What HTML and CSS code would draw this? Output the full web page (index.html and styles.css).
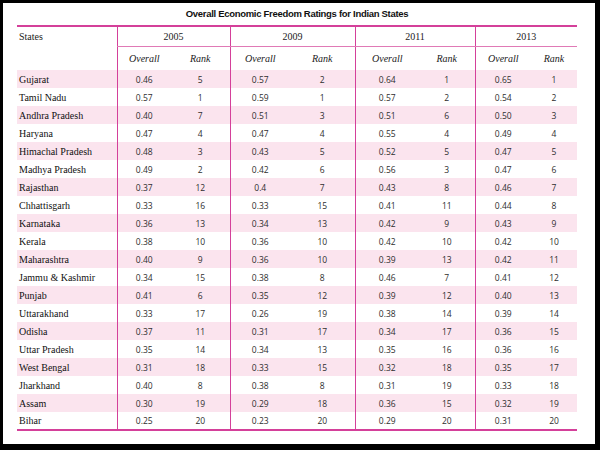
FILE: index.html
```html
<!DOCTYPE html>
<html>
<head>
<meta charset="utf-8">
<link rel="stylesheet" href="styles.css">
</head>
<body>
<div class="frame">
  <h1 class="title">Overall Economic Freedom Ratings for Indian States</h1>
  <table class="ratings">
    <colgroup>
      <col class="c-state">
      <col class="c-a1"><col class="c-a2">
      <col class="c-b1"><col class="c-b2">
      <col class="c-c1"><col class="c-c2">
      <col class="c-d1"><col class="c-d2">
    </colgroup>
    <thead>
      <tr class="yr">
        <th class="state-h" rowspan="2">States</th>
        <th class="grp" colspan="2">2005</th>
        <th class="grp" colspan="2">2009</th>
        <th class="grp" colspan="2">2011</th>
        <th class="grp" colspan="2">2013</th>
      </tr>
      <tr class="sub">
        <th class="grp">Overall</th><th>Rank</th>
        <th class="grp">Overall</th><th>Rank</th>
        <th class="grp">Overall</th><th>Rank</th>
        <th class="grp">Overall</th><th>Rank</th>
      </tr>
    </thead>
    <tbody>
      <tr><td class="st">Gujarat</td><td class="grp">0.46</td><td>5</td><td class="grp">0.57</td><td>2</td><td class="grp">0.64</td><td>1</td><td class="grp">0.65</td><td>1</td></tr>
      <tr><td class="st">Tamil Nadu</td><td class="grp">0.57</td><td>1</td><td class="grp">0.59</td><td>1</td><td class="grp">0.57</td><td>2</td><td class="grp">0.54</td><td>2</td></tr>
      <tr><td class="st">Andhra Pradesh</td><td class="grp">0.40</td><td>7</td><td class="grp">0.51</td><td>3</td><td class="grp">0.51</td><td>6</td><td class="grp">0.50</td><td>3</td></tr>
      <tr><td class="st">Haryana</td><td class="grp">0.47</td><td>4</td><td class="grp">0.47</td><td>4</td><td class="grp">0.55</td><td>4</td><td class="grp">0.49</td><td>4</td></tr>
      <tr><td class="st">Himachal Pradesh</td><td class="grp">0.48</td><td>3</td><td class="grp">0.43</td><td>5</td><td class="grp">0.52</td><td>5</td><td class="grp">0.47</td><td>5</td></tr>
      <tr><td class="st">Madhya Pradesh</td><td class="grp">0.49</td><td>2</td><td class="grp">0.42</td><td>6</td><td class="grp">0.56</td><td>3</td><td class="grp">0.47</td><td>6</td></tr>
      <tr><td class="st">Rajasthan</td><td class="grp">0.37</td><td>12</td><td class="grp">0.4</td><td>7</td><td class="grp">0.43</td><td>8</td><td class="grp">0.46</td><td>7</td></tr>
      <tr><td class="st">Chhattisgarh</td><td class="grp">0.33</td><td>16</td><td class="grp">0.33</td><td>15</td><td class="grp">0.41</td><td>11</td><td class="grp">0.44</td><td>8</td></tr>
      <tr><td class="st">Karnataka</td><td class="grp">0.36</td><td>13</td><td class="grp">0.34</td><td>13</td><td class="grp">0.42</td><td>9</td><td class="grp">0.43</td><td>9</td></tr>
      <tr><td class="st">Kerala</td><td class="grp">0.38</td><td>10</td><td class="grp">0.36</td><td>10</td><td class="grp">0.42</td><td>10</td><td class="grp">0.42</td><td>10</td></tr>
      <tr><td class="st">Maharashtra</td><td class="grp">0.40</td><td>9</td><td class="grp">0.36</td><td>10</td><td class="grp">0.39</td><td>13</td><td class="grp">0.42</td><td>11</td></tr>
      <tr><td class="st">Jammu &amp; Kashmir</td><td class="grp">0.34</td><td>15</td><td class="grp">0.38</td><td>8</td><td class="grp">0.46</td><td>7</td><td class="grp">0.41</td><td>12</td></tr>
      <tr><td class="st">Punjab</td><td class="grp">0.41</td><td>6</td><td class="grp">0.35</td><td>12</td><td class="grp">0.39</td><td>12</td><td class="grp">0.40</td><td>13</td></tr>
      <tr><td class="st">Uttarakhand</td><td class="grp">0.33</td><td>17</td><td class="grp">0.26</td><td>19</td><td class="grp">0.38</td><td>14</td><td class="grp">0.39</td><td>14</td></tr>
      <tr><td class="st">Odisha</td><td class="grp">0.37</td><td>11</td><td class="grp">0.31</td><td>17</td><td class="grp">0.34</td><td>17</td><td class="grp">0.36</td><td>15</td></tr>
      <tr><td class="st">Uttar Pradesh</td><td class="grp">0.35</td><td>14</td><td class="grp">0.34</td><td>13</td><td class="grp">0.35</td><td>16</td><td class="grp">0.36</td><td>16</td></tr>
      <tr><td class="st">West Bengal</td><td class="grp">0.31</td><td>18</td><td class="grp">0.33</td><td>15</td><td class="grp">0.32</td><td>18</td><td class="grp">0.35</td><td>17</td></tr>
      <tr><td class="st">Jharkhand</td><td class="grp">0.40</td><td>8</td><td class="grp">0.38</td><td>8</td><td class="grp">0.31</td><td>19</td><td class="grp">0.33</td><td>18</td></tr>
      <tr><td class="st">Assam</td><td class="grp">0.30</td><td>19</td><td class="grp">0.29</td><td>18</td><td class="grp">0.36</td><td>15</td><td class="grp">0.32</td><td>19</td></tr>
      <tr><td class="st">Bihar</td><td class="grp">0.25</td><td>20</td><td class="grp">0.23</td><td>20</td><td class="grp">0.29</td><td>20</td><td class="grp">0.31</td><td>20</td></tr>
    </tbody>
  </table>
</div>
</body>
</html>
```
FILE: styles.css
```css
html, body {
  margin: 0;
  padding: 0;
  background: #000;
}
body {
  width: 600px;
  height: 450px;
  overflow: hidden;
}
.frame {
  margin: 3px 5px 6px 3px;
  width: 592px;
  height: 441px;
  background: #fff;
  box-sizing: border-box;
  padding-left: 14px;
}
.title {
  margin: 0;
  width: 560px;
  height: 22px;
  line-height: 22px;
  text-align: center;
  font-family: "Liberation Sans", Arial, sans-serif;
  font-weight: bold;
  font-size: 9.5px;
  letter-spacing: -0.3px;
  color: #111;
}
.ratings {
  width: 560px;
  table-layout: fixed;
  border-collapse: collapse;
  border-top: 2px solid #d4409a;
  border-bottom: 2px solid #d4409a;
  font-family: "Liberation Serif", serif;
  font-size: 10px;
  color: #222;
}
.c-state { width: 100px; }
.c-a1 { width: 54px; }
.c-a2 { width: 59px; }
.c-b1 { width: 60px; }
.c-b2 { width: 65px; }
.c-c1 { width: 64px; }
.c-c2 { width: 56px; }
.c-d1 { width: 56px; }
.c-d2 { width: 46px; }
.ratings th, .ratings td {
  padding: 0;
  text-align: center;
  font-weight: normal;
}
.ratings .grp {
  border-left: 1px solid #d4409a;
}
.yr th {
  height: 19px;
}
.yr th.grp {
  border-bottom: 1px solid #e07ab6;
}
.state-h {
  text-align: left !important;
  vertical-align: top;
  padding: 4px 0 0 2px !important;
}
.sub th {
  height: 23px;
  font-style: italic;
}
.ratings tbody tr {
  height: 18px;
}
.ratings tbody tr:nth-child(odd) td {
  background: #fbe4ee;
}
.ratings tbody td {
  font-family: "Open Sans", sans-serif;
  font-size: 8.5px;
  color: #2e2e2e;
}
.ratings tbody td.st {
  text-align: left;
  padding-left: 2px;
  font-family: "Liberation Serif", serif;
  font-size: 10px;
  color: #111;
}
```
